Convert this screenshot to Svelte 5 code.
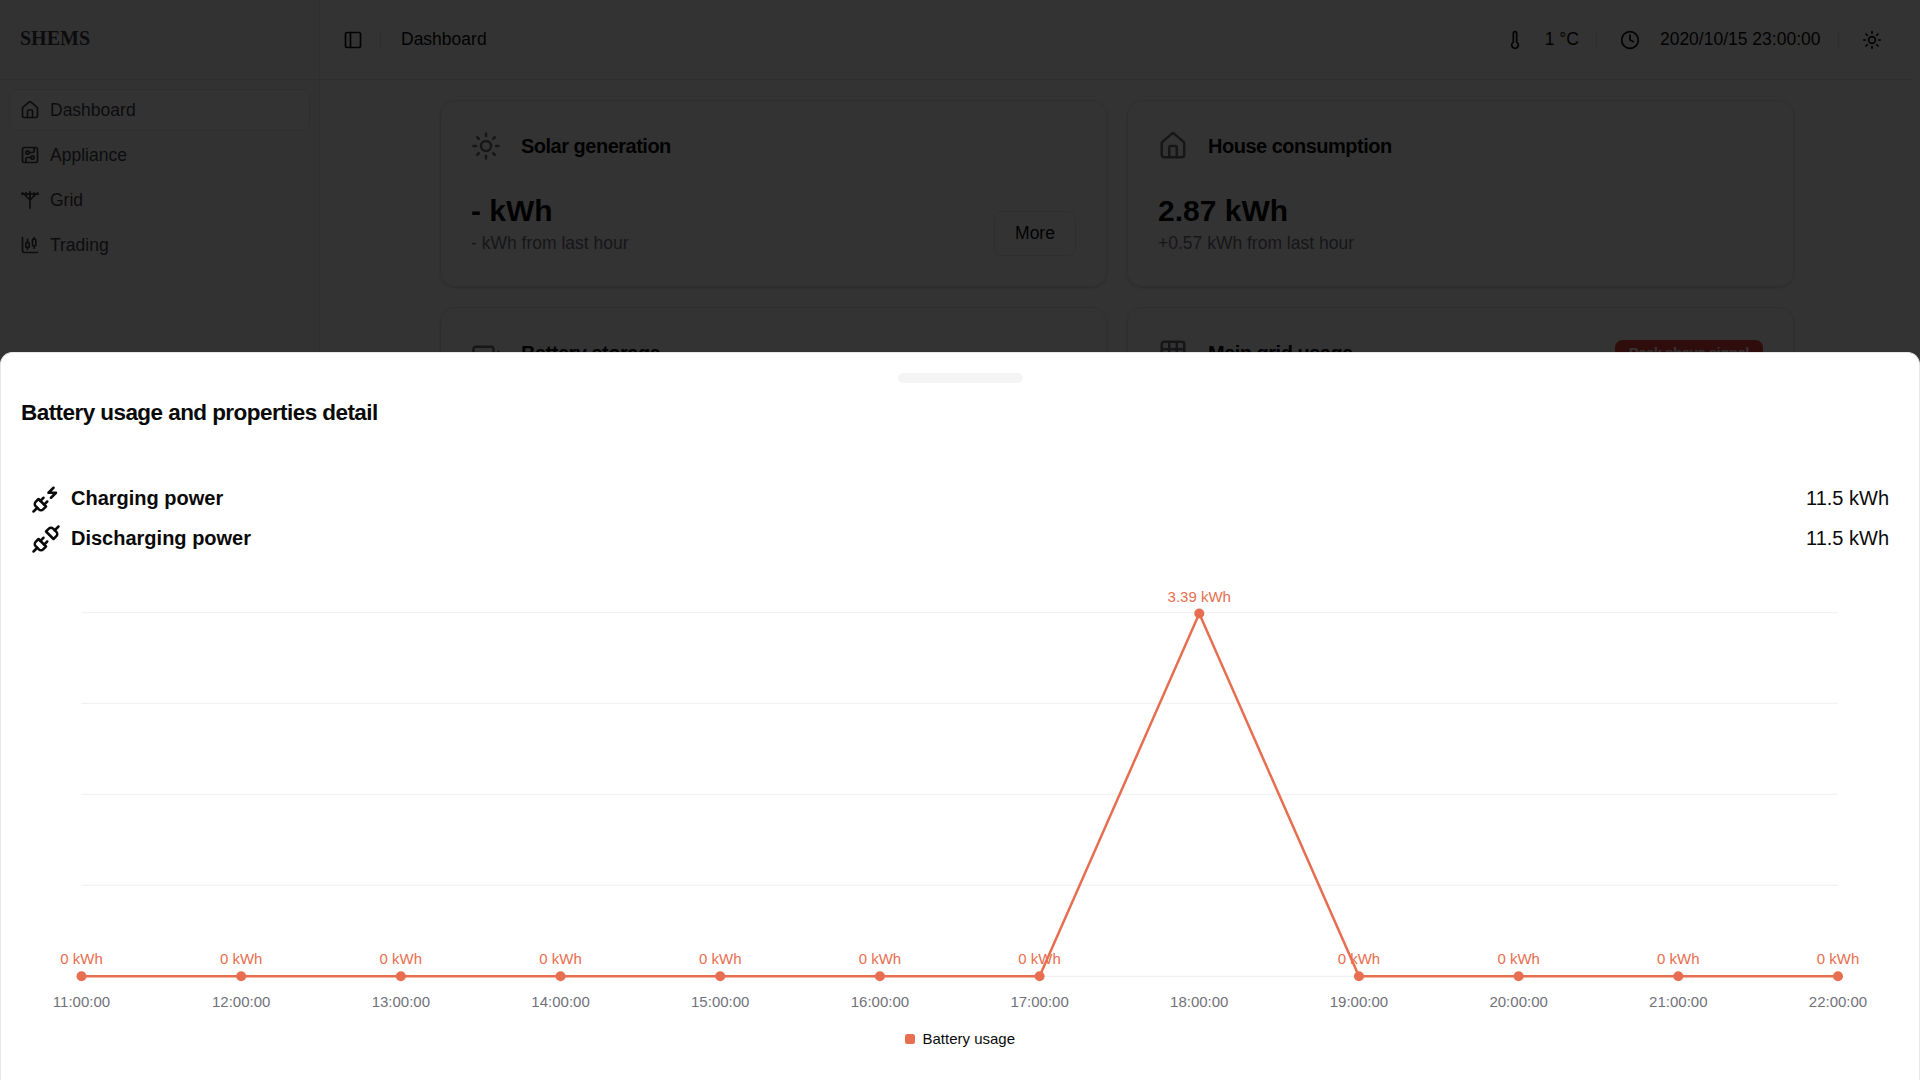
<script>
  const icons = {
    house: '<path d="M15 21v-8a1 1 0 0 0-1-1h-4a1 1 0 0 0-1 1v8"/><path d="M3 10a2 2 0 0 1 .709-1.528l7-5.999a2 2 0 0 1 2.582 0l7 5.999A2 2 0 0 1 21 10v9a2 2 0 0 1-2 2H5a2 2 0 0 1-2-2z"/>',
    circuit: '<rect width="18" height="18" x="3" y="3" rx="2"/><path d="M11 9h4a2 2 0 0 0 2-2V3"/><circle cx="9" cy="9" r="2"/><path d="M7 21v-4a2 2 0 0 1 2-2h4"/><circle cx="15" cy="15" r="2"/>',
    pole: '<path d="M12 2v20M2 5h20M3 3v2M7 3v2M17 3v2M21 3v2M19 5l-7 7-7-7"/>',
    candles: '<path d="M9 5v4"/><rect width="4" height="6" x="7" y="9" rx="1"/><path d="M9 15v2M17 3v2"/><rect width="4" height="8" x="15" y="5" rx="1"/><path d="M17 13v3M3 3v16a2 2 0 0 0 2 2h16"/>',
    panel: '<rect width="18" height="18" x="3" y="3" rx="2"/><path d="M9 3v18"/>',
    thermometer: '<path d="M14 4v10.54a4 4 0 1 1-4 0V4a2 2 0 0 1 4 0Z"/>',
    clock: '<circle cx="12" cy="12" r="10"/><path d="M12 6v6l4 2"/>',
    sun: '<circle cx="12" cy="12" r="4"/><path d="M12 2v2M12 20v2M4.93 4.93l1.41 1.41M17.66 17.66l1.41 1.41M2 12h2M20 12h2M6.34 17.66l-1.41 1.41M19.07 4.93l-1.41 1.41"/>',
    battery: '<rect width="16" height="10" x="2" y="7" rx="2"/><path d="M22 11v2"/>',
    grid: '<rect width="18" height="18" x="3" y="3" rx="2"/><path d="M3 9h18M3 15h18M9 3v18M15 3v18"/>',
    plugZap: '<path d="M6.3 20.3a2.4 2.4 0 0 0 3.4 0L12 18l-6-6-2.3 2.3a2.4 2.4 0 0 0 0 3.4Z"/><path d="M2 22l3-3M7.5 13.5L10 11M10.5 16.5L13 14M18 3l-4 4h6l-4 4"/>',
    unplug: '<path d="M19 5l3-3M2 22l3-3"/><path d="M6.3 20.3a2.4 2.4 0 0 0 3.4 0L12 18l-6-6-2.3 2.3a2.4 2.4 0 0 0 0 3.4Z"/><path d="M7.5 13.5L10 11M10.5 16.5L13 14"/><path d="M12 6l6 6 2.3-2.3a2.4 2.4 0 0 0 0-3.4l-2.6-2.6a2.4 2.4 0 0 0-3.4 0Z"/>'
  };

  const nav = [
    { label: 'Dashboard', icon: 'house', active: true },
    { label: 'Appliance', icon: 'circuit' },
    { label: 'Grid', icon: 'pole' },
    { label: 'Trading', icon: 'candles' }
  ];

  const cards = [
    { title: 'Solar generation', icon: 'sun', value: '- kWh', note: '- kWh from last hour', more: true },
    { title: 'House consumption', icon: 'house', value: '2.87 kWh', note: '+0.57 kWh from last hour' },
    { title: 'Battery storage', icon: 'battery' },
    { title: 'Main grid usage', icon: 'grid', badge: 'Peak shave signal' }
  ];

  const power = [
    { label: 'Charging power', icon: 'plugZap', value: '11.5 kWh' },
    { label: 'Discharging power', icon: 'unplug', value: '11.5 kWh' }
  ];

  // Hourly battery usage, 11:00 to 22:00
  const usage = [0, 0, 0, 0, 0, 0, 0, 3.39, 0, 0, 0, 0];
  const left = 50.5;
  const right = 1807;
  const top = 32.5;
  const bottom = 396.25;
  const maxY = 3.4;
  const points = usage.map((value, i) => ({
    value,
    time: `${11 + i}:00:00`,
    x: left + ((right - left) * i) / (usage.length - 1),
    y: bottom - ((bottom - top) * value) / maxY
  }));
  const line = points.map((p) => `${p.x},${p.y}`).join(' ');
  const gridYs = [0, 1, 2, 3, 4].map((i) => top + ((bottom - top) * i) / 4);
</script>

{#snippet icon(name, size)}
  <svg class="icon {size}" viewBox="0 0 24 24" aria-hidden="true">{@html icons[name]}</svg>
{/snippet}

<div class="app">
  <aside class="sidebar">
    <div class="brand">SHEMS</div>
    <nav>
      {#each nav as item}
        <div class="nav-item" class:active={item.active}>
          {@render icon(item.icon, 'sm')}
          <span>{item.label}</span>
        </div>
      {/each}
    </nav>
  </aside>

  <main>
    <header>
      <div class="head-left">
        <div class="toggle">{@render icon('panel', 'sm')}</div>
        <i class="sep"></i>
        <span class="crumb">Dashboard</span>
      </div>
      <div class="head-right">
        <div class="icon-btn">{@render icon('thermometer', 'sm')}</div>
        <span class="info">1 °C</span>
        <i class="sep"></i>
        <div class="icon-btn">{@render icon('clock', 'sm')}</div>
        <span class="info">2020/10/15 23:00:00</span>
        <i class="sep"></i>
        <div class="icon-btn">{@render icon('sun', 'sm')}</div>
      </div>
    </header>

    <section class="cards">
      {#each cards as card}
        <article class="card">
          <div class="card-head">
            {@render icon(card.icon, 'lg')}
            <h3>{card.title}</h3>
            {#if card.badge}<span class="badge">{card.badge}</span>{/if}
          </div>
          {#if card.value}
            <div class="card-body">
              <div>
                <div class="value">{card.value}</div>
                <p>{card.note}</p>
              </div>
              {#if card.more}<button>More</button>{/if}
            </div>
          {/if}
        </article>
      {/each}
    </section>
  </main>
</div>

<div class="overlay"></div>

<div class="drawer" role="dialog" aria-label="Battery usage and properties detail">
  <div class="handle"></div>
  <h2>Battery usage and properties detail</h2>
  <div class="content">
    <div class="power">
      {#each power as row}
        <div class="power-row">
          {@render icon(row.icon, 'lg')}
          <b>{row.label}</b>
          <span>{row.value}</span>
        </div>
      {/each}
    </div>
    <svg class="chart" viewBox="0 0 1858.75 440" width="1858.75" height="440">
      {#each gridYs as y}
        <line class="grid" x1={left} x2={right} y1={y} y2={y} />
      {/each}
      {#each points as p}
        <text class="tick" x={p.x} y={bottom + 31}>{p.time}</text>
      {/each}
      {#each points as p}
        <text class="label" x={p.x} y={p.y - 12}>{p.value} kWh</text>
      {/each}
      <polyline class="series" points={line} />
      {#each points as p}
        <circle class="dot" cx={p.x} cy={p.y} r="5" />
      {/each}
    </svg>
    <div class="legend"><i></i>Battery usage</div>
  </div>
</div>

<style>
  :global(html) {
    font-size: 20px;
  }
  :global(body) {
    overflow: hidden;
    background: #fff;
    color: #0a0a0a;
    font-family: 'Liberation Sans', Arial, sans-serif;
  }
  .app,
  .app *,
  .drawer,
  .drawer * {
    box-sizing: border-box;
  }
  .app {
    display: flex;
    height: 1080px;
    padding-right: 6px;
    overflow: hidden;
    font-size: 0.875rem;
    line-height: 1.25rem;
  }
  h2,
  h3,
  p {
    margin: 0;
  }
  .icon {
    flex: none;
    display: block;
    fill: none;
    stroke: currentColor;
    stroke-width: 2;
    stroke-linecap: round;
    stroke-linejoin: round;
  }
  .sm {
    width: 1rem;
    height: 1rem;
  }
  .lg {
    width: 1.5rem;
    height: 1.5rem;
  }

  /* Sidebar */
  .sidebar {
    flex: none;
    width: 16rem;
    background: #fafafa;
    border-right: 1px solid #e5e7eb;
    color: #3f3f46;
  }
  .brand {
    display: flex;
    align-items: center;
    height: 4rem;
    padding: 0 1rem 2px;
    border-bottom: 1px solid #e5e7eb;
    font: 700 1rem 'Liberation Serif', serif;
  }
  nav {
    display: flex;
    flex-direction: column;
    gap: 0.25rem;
    padding: 0.5rem;
  }
  .nav-item {
    display: flex;
    align-items: center;
    gap: 0.5rem;
    height: 2rem;
    padding: 0 0.5rem;
    border-radius: 0.375rem;
  }
  .active {
    background: #fff;
    box-shadow: 0 0 0 1px #e5e7eb;
  }

  /* Top bar */
  main {
    flex: 1;
    min-width: 0;
  }
  header {
    display: flex;
    align-items: center;
    justify-content: space-between;
    height: 4rem;
    padding: 0 1rem;
    border-bottom: 1px solid #e5e7eb;
  }
  .head-left,
  .head-right {
    display: flex;
    align-items: center;
  }
  .toggle {
    padding: 0 17px 0 3px;
  }
  .sep {
    width: 1px;
    height: 1rem;
    background: #e5e7eb;
  }
  .head-left .sep {
    margin-right: 1rem;
  }
  .crumb,
  .info {
    padding-bottom: 1px;
  }
  .head-right .sep {
    margin: 0 0.5rem;
  }
  .icon-btn {
    display: grid;
    place-items: center;
    width: 2.25rem;
    height: 2.25rem;
  }
  .info {
    margin: 0 7.5px 0 7.5px;
  }

  /* Cards */
  .cards {
    display: grid;
    grid-template-columns: 667px 667px;
    grid-auto-rows: 187px;
    gap: 1rem;
    justify-content: center;
    padding-top: 1rem;
  }
  .card {
    display: flex;
    flex-direction: column;
    justify-content: space-between;
    padding: 1.5rem;
    border: 1px solid #e5e7eb;
    border-radius: 0.75rem;
    box-shadow: 0 1px 3px rgb(0 0 0 / 0.1), 0 1px 2px rgb(0 0 0 / 0.08);
  }
  .card-head {
    display: flex;
    align-items: center;
    gap: 1rem;
    color: #71717a;
  }
  h3 {
    color: #0a0a0a;
    font-size: 1rem;
    line-height: 1;
    letter-spacing: -0.025em;
  }
  .badge {
    margin-left: auto;
    padding: 3px 14px;
    border-radius: 0.375rem;
    background: #ef4444;
    color: #fafafa;
    font-size: 0.75rem;
    font-weight: 700;
    line-height: 1rem;
    letter-spacing: -0.035em;
  }
  .card-body {
    display: flex;
    align-items: flex-end;
    justify-content: space-between;
  }
  .value {
    font-size: 1.5rem;
    font-weight: 700;
    line-height: 2rem;
  }
  p {
    color: #71717a;
  }
  button {
    width: 82px;
    height: 2.25rem;
    padding: 0;
    border: 1px solid #e5e7eb;
    border-radius: 0.375rem;
    background: #fff;
    color: #0a0a0a;
    font: inherit;
  }

  /* Drawer */
  .overlay {
    position: fixed;
    inset: 0;
    background: rgb(0 0 0 / 0.8);
  }
  .drawer {
    position: fixed;
    inset: 352px 0 0;
    border: 1px solid #e5e7eb;
    border-bottom: 0;
    border-radius: 12.5px 12.5px 0 0;
    background: #fff;
  }
  .handle {
    width: 125px;
    height: 10px;
    margin: 20px auto 0;
    border-radius: 10px;
    background: #f4f4f5;
  }
  h2 {
    padding: 19px 20px 0;
    font-size: 1.125rem;
    line-height: 1;
    letter-spacing: -0.025em;
  }
  .content {
    padding: 54px 30px 0;
  }
  .power-row {
    display: flex;
    align-items: center;
    height: 2rem;
    font-size: 1rem;
  }
  .power-row b {
    flex: 1;
    padding-left: 10px;
  }
  .chart {
    display: block;
    margin-top: 21px;
    font-size: 15px;
    text-anchor: middle;
  }
  .grid {
    stroke: #f2f2f3;
    stroke-width: 1.25;
  }
  .tick {
    fill: #71717a;
  }
  .label {
    fill: #e76e50;
  }
  .series {
    fill: none;
    stroke: #e76e50;
    stroke-width: 2.5;
  }
  .dot {
    fill: #e76e50;
  }
  .legend {
    display: flex;
    align-items: center;
    justify-content: center;
    gap: 7.5px;
    height: 20px;
    margin-top: 9px;
    font-size: 15px;
  }
  .legend i {
    width: 10px;
    height: 10px;
    border-radius: 2.5px;
    background: #e76e50;
  }
</style>
